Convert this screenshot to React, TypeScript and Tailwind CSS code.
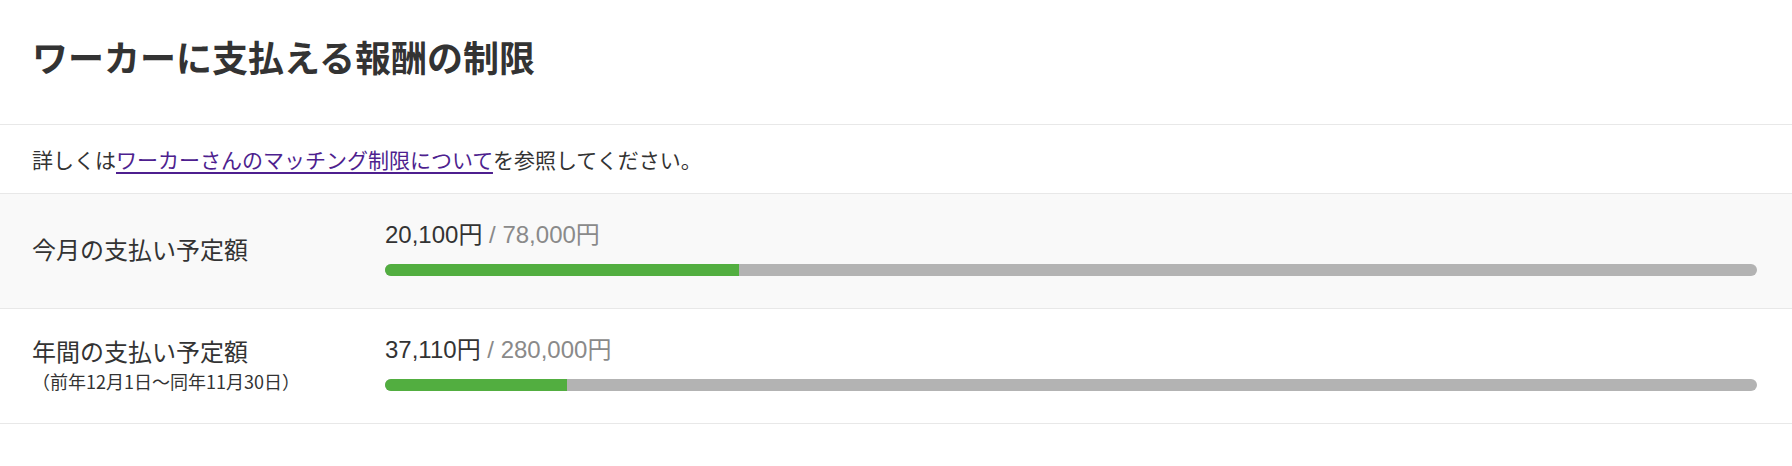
import React from "react";

type Row = {
  label: string;
  note?: string;
  current: string;
  limit: string;
  ratio: number;
  shaded: boolean;
};

const rows: Row[] = [
  { label: "今月の支払い予定額", current: "20,100円", limit: "/ 78,000円", ratio: 20100 / 78000, shaded: true },
  {
    label: "年間の支払い予定額",
    note: "（前年12月1日〜同年11月30日）",
    current: "37,110円",
    limit: "/ 280,000円",
    ratio: 37110 / 280000,
    shaded: false,
  },
];

export default function App() {
  return (
    <div className="w-full min-h-[466px] bg-white text-[#333333] font-['Liberation_Sans','Noto_Sans_CJK_JP',sans-serif]">
      <div className="h-[125px] border-b border-[#e8e8e8] flex items-center pl-[32px] pb-[13px]">
        <h1 className="text-[36px] font-bold leading-none font-['Noto_Sans_CJK_JP',sans-serif] text-[#333333]">
          ワーカーに支払える報酬の制限
        </h1>
      </div>
      <div className="h-[69px] border-b border-[#e8e8e8] flex items-center pl-[32px]">
        <p className="text-[21px] leading-none font-['Noto_Sans_CJK_JP',sans-serif]">
          詳しくは
          <a
            href="#"
            className="text-[#4e1f8f] underline decoration-[2px] underline-offset-[4px]"
          >
            ワーカーさんのマッチング制限について
          </a>
          を参照してください。
        </p>
      </div>
      {rows.map((r) => (
        <div
          key={r.label}
          className={`h-[115px] border-b border-[#e8e8e8] flex items-center pl-[32px] pr-[35px] ${
            r.shaded ? "bg-[#f9f9f9]" : "bg-white"
          }`}
        >
          <div className="w-[353px] shrink-0 pb-[4px] font-['Noto_Sans_CJK_JP',sans-serif]">
            <div className="text-[24px] leading-none">{r.label}</div>
            {r.note && <div className="text-[18px] leading-none mt-[9px]">{r.note}</div>}
          </div>
          <div className="flex-1 pb-[4px]">
            <div className="text-[24px] leading-none whitespace-nowrap">
              <span>{r.current}</span>{" "}
              <span className="text-[#8a8a8a]">{r.limit}</span>
            </div>
            <div className="mt-[17px] h-[12px] w-full rounded-full bg-[#b3b3b3] overflow-hidden">
              <div className="h-full bg-[#52ae40]" style={{ width: `${r.ratio * 100}%` }} />
            </div>
          </div>
        </div>
      ))}
    </div>
  );
}
